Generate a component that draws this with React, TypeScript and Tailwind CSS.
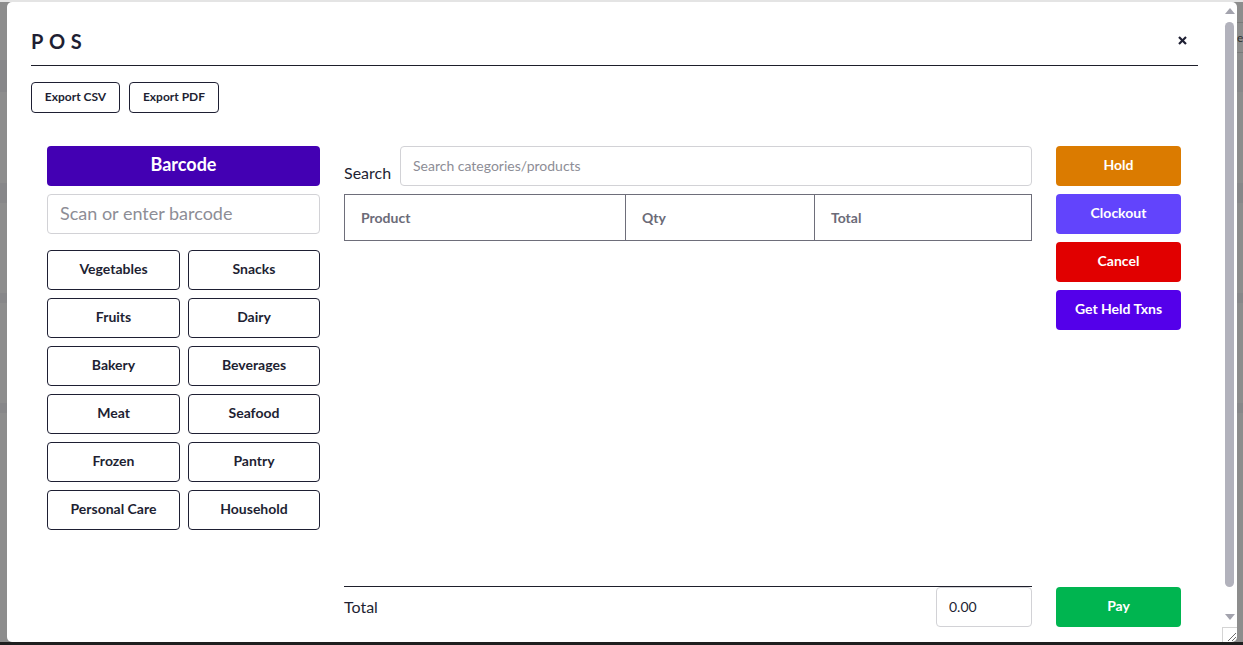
import React from 'react';

const categories = [
  'Vegetables', 'Snacks',
  'Fruits', 'Dairy',
  'Bakery', 'Beverages',
  'Meat', 'Seafood',
  'Frozen', 'Pantry',
  'Personal Care', 'Household',
];

const actions = [
  { label: 'Hold', cls: 'bg-[#db7b00]' },
  { label: 'Clockout', cls: 'bg-[#6244fc]' },
  { label: 'Cancel', cls: 'bg-[#e10000]' },
  { label: 'Get Held Txns', cls: 'bg-[#5400ea]' },
];

// Fake native scrollbar drawn at the modal's right edge
const ScrollBar: React.FC = () => (
  <div className="w-[15px] h-full flex flex-col items-center">
    <svg width="10" height="6" viewBox="0 0 10 6" className="mt-[6px]">
      <polygon points="5,0 10,6 0,6" fill="#a3a3ad" />
    </svg>
    <div className="mt-[8px] w-[9px] h-[567px] rounded-full bg-[#b2b2bc]" />
    <svg width="10" height="6" viewBox="0 0 10 6" className="mt-[27px]">
      <polygon points="0,0 10,0 5,6" fill="#a3a3ad" />
    </svg>
    <div className="mt-[7px] w-[15px] h-[15px] border-l border-t border-[#d4d4d4] relative">
      <svg width="13" height="13" viewBox="0 0 13 13" className="absolute right-0 bottom-0">
        <line x1="12" y1="4" x2="4" y2="12" stroke="#6b6b6b" strokeWidth="1" />
        <line x1="12" y1="8" x2="8" y2="12" stroke="#6b6b6b" strokeWidth="1" />
      </svg>
    </div>
  </div>
);

export default function App() {
  return (
    <div
      className="relative w-full h-[645px] overflow-hidden bg-[#8d8d8d] text-[#1e1f33]"
      style={{ fontFamily: 'Lato, "Noto Sans", sans-serif' }}
    >
      {/* Page beneath the overlay */}
      <div className="flex flex-col h-full">
        <div className="h-[2px] bg-[#e4e4e4]" />
        <div className="h-[58px]" />
        <div className="h-[32px] bg-[#878789]" />
        <div className="h-[91px]" />
        <div className="h-[20px] bg-[#878789]" />
        <div className="h-[90px]" />
        <div className="h-[10px] bg-[#878789]" />
        <div className="h-[100px]" />
        <div className="h-[10px] bg-[#878789]" />
        <div className="flex-1" />
        <div className="h-[3px] bg-[#1f1f1f]" />
      </div>
      <div className="absolute right-0 top-[22px] w-[6px] h-[31px] border-t border-b border-[#7a7a7a] text-[12px] leading-[30px] text-[#333]">e</div>

      {/* Modal */}
      <div className="absolute left-[7px] top-[2px] w-[1230px] h-[640px] bg-white rounded-[5px] flex">
        <div className="flex-1 flex flex-col pl-[24px] pr-[24px]">
          {/* Header */}
          <div className="flex items-center justify-between pt-[27px] pb-[12px] border-b border-[#1e1f2b]">
            <h1 className="text-[20px] leading-[24px] font-bold tracking-[0.28em]">POS</h1>
            <button className="mr-[11px] mt-[-2px]">
              <svg width="9" height="9" viewBox="0 0 9 9">
                <line x1="1" y1="1" x2="8" y2="8" stroke="#1e1f33" strokeWidth="2.2" />
                <line x1="8" y1="1" x2="1" y2="8" stroke="#1e1f33" strokeWidth="2.2" />
              </svg>
            </button>
          </div>

          {/* Export */}
          <div className="flex gap-[9px] mt-[16px]">
            <button className="w-[89px] h-[31px] pb-[2px] border border-[#1e1f33] rounded-[4px] text-[12px] font-bold">Export CSV</button>
            <button className="w-[90px] h-[31px] pb-[2px] border border-[#1e1f33] rounded-[4px] text-[12px] font-bold">Export PDF</button>
          </div>

          {/* Main */}
          <div className="flex gap-[24px] px-[16px] mt-[33px] h-[481px]">
            {/* Left: barcode + categories */}
            <div className="w-[273px] flex flex-col">
              <button className="h-[40px] pb-[3px] rounded-[4px] bg-[#4300b3] text-white text-[18px] font-bold">Barcode</button>
              <input
                className="mt-[8px] h-[40px] px-[12px] pb-[2px] border border-[#d2d2d6] rounded-[4px] text-[18px] placeholder:text-[#8d8d96] outline-none"
                placeholder="Scan or enter barcode"
              />
              <div className="mt-[16px] grid grid-cols-[133px_132px] gap-[8px]">
                {categories.map(c => (
                  <button key={c} className="h-[40px] pb-[4px] border border-[#1e1f33] rounded-[4px] text-[14px] font-bold">
                    {c}
                  </button>
                ))}
              </div>
            </div>

            {/* Middle: search, cart table, total */}
            <div className="w-[688px] flex flex-col">
              <div className="flex items-end gap-[8px]">
                <span className="text-[16px] leading-[20px] mb-[3px] w-[48px]">Search</span>
                <input
                  className="flex-1 h-[40px] px-[12px] pb-[2px] border border-[#d2d2d6] rounded-[4px] text-[14px] placeholder:text-[#8d8d96] outline-none"
                  placeholder="Search categories/products"
                />
              </div>
              <div className="mt-[8px] grid grid-cols-[280px_189px_1fr] h-[47px] border border-[#6e6e7a] text-[14px] font-bold text-[#6b6b78]">
                <div className="flex items-center pl-[16px] pb-[1px]">Product</div>
                <div className="flex items-center pl-[16px] pb-[1px] border-l border-[#6e6e7a]">Qty</div>
                <div className="flex items-center pl-[16px] pb-[1px] border-l border-[#6e6e7a]">Total</div>
              </div>
              <div className="flex-1" />
              <div className="border-t border-[#1e1f2b] flex items-center justify-between">
                <span className="text-[16px] pb-[1px]">Total</span>
                <input
                  readOnly
                  value="0.00"
                  className="w-[96px] h-[40px] px-[12px] pb-[1px] border border-[#d2d2d6] rounded-[4px] text-[14px] outline-none"
                />
              </div>
            </div>

            {/* Right: actions */}
            <div className="w-[125px] flex flex-col gap-[8px]">
              {actions.map(a => (
                <button key={a.label} className={`h-[40px] pb-[4px] rounded-[4px] text-white text-[14px] font-bold ${a.cls}`}>
                  {a.label}
                </button>
              ))}
              <div className="flex-1" />
              <button className="h-[40px] pb-[4px] rounded-[4px] bg-[#00b550] text-white text-[14px] font-bold">Pay</button>
            </div>
          </div>
        </div>
        <ScrollBar />
      </div>
    </div>
  );
}
